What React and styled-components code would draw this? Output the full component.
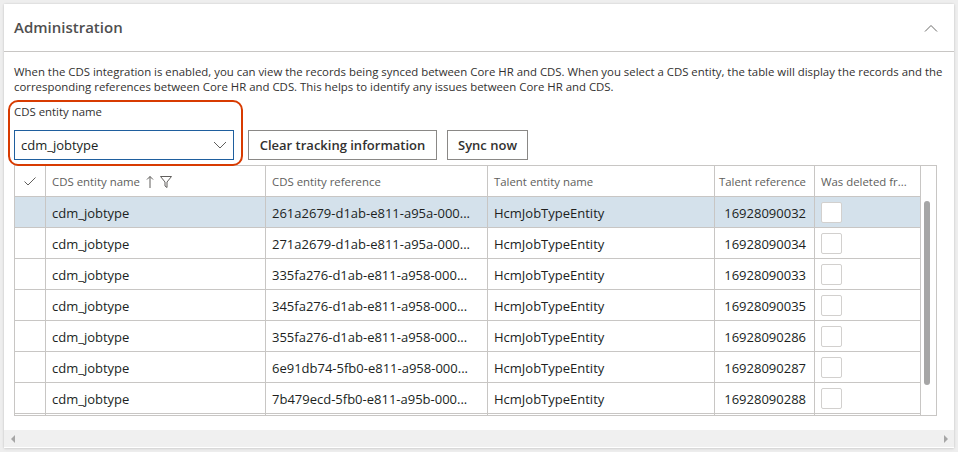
import React from "react";
import styled, { createGlobalStyle } from "styled-components";

const GlobalStyle = createGlobalStyle`
  html, body {
    margin: 0;
    padding: 0;
    background: #eeeeee;
    font-family: "Open Sans", "Noto Sans", sans-serif;
    color: #323130;
  }
  * { box-sizing: border-box; }
`;

const Page = styled.div`
  padding: 4px;
  width: 958px;
  height: 452px;
`;

const Card = styled.section`
  width: 950px;
  height: 444px;
  background: #ffffff;
  box-shadow: 0 0 2px rgba(0, 0, 0, 0.12), 0 1px 3px rgba(0, 0, 0, 0.08);
  display: flex;
  flex-direction: column;
`;

const Header = styled.header`
  height: 48px;
  flex: none;
  display: flex;
  align-items: center;
  justify-content: space-between;
  padding: 0 16px 0 10px;
  border-bottom: 1px solid #c8c6c4;
`;

const Title = styled.h2`
  margin: 0 0 2px;
  font-size: 15px;
  font-weight: 600;
  color: #4f4f4f;
`;

const Body = styled.div`
  flex: 1;
  padding: 12px 10px 0 10px;
  display: flex;
  flex-direction: column;
`;

const Description = styled.p`
  margin: 0;
  font-size: 11.4px;
  line-height: 15px;
  color: #323130;

  span {
    display: block;
    white-space: nowrap;
  }
`;

const Toolbar = styled.div`
  margin-top: 10px;
  display: flex;
  align-items: flex-end;
  gap: 14px;
`;

const FieldGroup = styled.div`
  position: relative;
  display: flex;
  flex-direction: column;

  &::after {
    content: "";
    position: absolute;
    left: -6px;
    top: -4px;
    right: -9px;
    bottom: -6px;
    border: 2px solid #d83b01;
    border-radius: 10px;
    pointer-events: none;
  }
`;

const Label = styled.label`
  font-size: 11.4px;
  line-height: 16px;
  color: #323130;
  margin-bottom: 10px;
`;

const Select = styled.div`
  width: 220px;
  height: 30px;
  border: 1px solid #1f5f9e;
  display: flex;
  align-items: center;
  justify-content: space-between;
  padding: 0 6px 0 6px;
  font-size: 13px;
  color: #201f1e;
`;

const Buttons = styled.div`
  display: flex;
  gap: 10px;
`;

const Button = styled.button`
  height: 30px;
  width: ${(p) => p.$w}px;
  border: 1px solid #8a8886;
  background: #ffffff;
  font-family: inherit;
  font-size: 13px;
  font-weight: 600;
  color: #323130;
  padding: 0;
`;

const Table = styled.div`
  margin-top: 5px;
  width: 923px;
  height: 251px;
  border: 1px solid #c8c6c4;
  display: flex;
  overflow: hidden;
`;

const Grid = styled.div`
  display: grid;
  grid-template-columns: 31px 220px 222px 227px 100px 106px;
  grid-auto-rows: 31px;
  align-content: start;
`;

const Cell = styled.div`
  display: flex;
  align-items: center;
  justify-content: ${(p) => (p.$right ? "flex-end" : "flex-start")};
  padding: 1px ${(p) => (p.$right ? "8px" : "0")} 0 ${(p) => (p.$right ? "0" : "6px")};
  border-right: 1px solid #c8c6c4;
  border-bottom: 1px solid #c8c6c4;
  background: ${(p) => (p.$selected ? "#d4e1eb" : "#ffffff")};
  font-size: 13px;
  color: #201f1e;
  white-space: nowrap;
  overflow: hidden;
`;

const HeadCell = styled(Cell)`
  font-size: 11.4px;
  color: #605e5c;
  gap: 6px;
`;

const CheckCell = styled(Cell)`
  justify-content: center;
  padding: 0;
`;

const Box = styled.span`
  width: 21px;
  height: 21px;
  border: 1px solid #d2d0ce;
  border-radius: 2px;
  background: #ffffff;
`;

const ScrollCol = styled.div`
  flex: 1;
  position: relative;
  background: #ffffff;
`;

const Thumb = styled.div`
  position: absolute;
  left: 3px;
  top: 35px;
  width: 6px;
  height: 184px;
  border-radius: 3px;
  background: #a6a6a6;
`;

const HScroll = styled.div`
  margin-top: auto;
  margin-bottom: 1px;
  height: 17px;
  background: #f0f0f0;
  display: flex;
  align-items: center;
  justify-content: space-between;
  padding: 0 6px 0 7px;
`;

const Arrow = styled.span`
  width: 0;
  height: 0;
  border-top: 4px solid transparent;
  border-bottom: 4px solid transparent;
  ${(p) =>
    p.$dir === "left"
      ? "border-right: 4px solid #a6a6a6;"
      : "border-left: 4px solid #a6a6a6;"}
`;

const rows = [
  ["261a2679-d1ab-e811-a95a-000...", "16928090032"],
  ["271a2679-d1ab-e811-a95a-000...", "16928090034"],
  ["335fa276-d1ab-e811-a958-000...", "16928090033"],
  ["345fa276-d1ab-e811-a958-000...", "16928090035"],
  ["355fa276-d1ab-e811-a958-000...", "16928090286"],
  ["6e91db74-5fb0-e811-a958-000...", "16928090287"],
  ["7b479ecd-5fb0-e811-a95b-000...", "16928090288"],
];

const Chevron = ({ up }) => (
  <svg width="14" height="8" viewBox="0 0 14 8" fill="none">
    <path
      d={up ? "M1 7.5L7 1.5L13 7.5" : "M1 1L7 7L13 1"}
      stroke={up ? "#6b6a69" : "#605e5c"}
      strokeWidth="1"
    />
  </svg>
);

const App = () => (
  <Page>
    <GlobalStyle />
    <Card>
      <Header>
        <Title>Administration</Title>
        <Chevron up />
      </Header>
      <Body>
        <Description>
          <span>
            When the CDS integration is enabled, you can view the records being synced between Core HR and CDS. When you
            select a CDS entity, the table will display the records and the
          </span>
          <span>
            corresponding references between Core HR and CDS. This helps to identify any issues between Core HR and CDS.
          </span>
        </Description>
        <Toolbar>
          <FieldGroup>
            <Label>CDS entity name</Label>
            <Select>
              cdm_jobtype
              <Chevron />
            </Select>
          </FieldGroup>
          <Buttons>
            <Button $w={189}>Clear tracking information</Button>
            <Button $w={81}>Sync now</Button>
          </Buttons>
        </Toolbar>
        <Table>
          <Grid>
            <CheckCell>
              <svg width="12" height="9" viewBox="0 0 12 9" fill="none">
                <path d="M0.5 4.5L4 8L11.5 0.5" stroke="#605e5c" strokeWidth="1" />
              </svg>
            </CheckCell>
            <HeadCell>
              CDS entity name
              <svg width="8" height="14" viewBox="0 0 8 14" fill="none">
                <path d="M4 13V1.5M1 4.5L4 1.5L7 4.5" stroke="#605e5c" strokeWidth="1" />
              </svg>
              <svg width="12" height="12" viewBox="0 0 12 12" fill="none">
                <path d="M0.5 0.5H11.5L7 6V11.5L5 10V6Z" stroke="#605e5c" strokeWidth="1" strokeLinejoin="round" />
              </svg>
            </HeadCell>
            <HeadCell>CDS entity reference</HeadCell>
            <HeadCell>Talent entity name</HeadCell>
            <HeadCell $right>Talent reference</HeadCell>
            <HeadCell>Was deleted fr...</HeadCell>
            {rows.map(([ref, num], i) => (
              <React.Fragment key={num}>
                <Cell $selected={i === 0} />
                <Cell $selected={i === 0}>cdm_jobtype</Cell>
                <Cell $selected={i === 0}>{ref}</Cell>
                <Cell $selected={i === 0}>HcmJobTypeEntity</Cell>
                <Cell $selected={i === 0} $right>
                  {num}
                </Cell>
                <Cell $selected={i === 0}>
                  <Box />
                </Cell>
              </React.Fragment>
            ))}
            {[0, 1, 2, 3, 4, 5].map((k) => (
              <Cell key={`end-${k}`} />
            ))}
          </Grid>
          <ScrollCol>
            <Thumb />
          </ScrollCol>
        </Table>
      </Body>
      <HScroll>
        <Arrow $dir="left" />
        <Arrow $dir="right" />
      </HScroll>
    </Card>
  </Page>
);

export default App;
